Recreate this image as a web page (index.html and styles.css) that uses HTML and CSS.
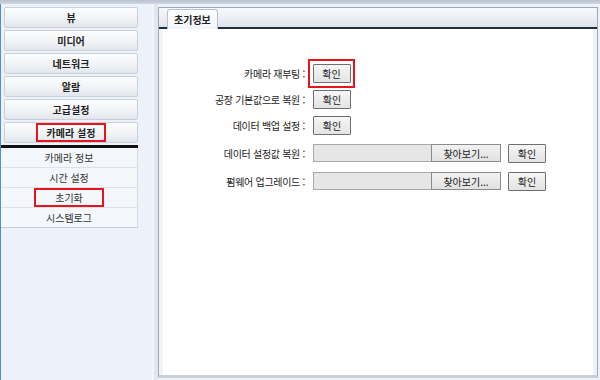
FILE: index.html
```html
<!DOCTYPE html>
<html lang="ko">
<head>
  <meta charset="UTF-8" />
  <title>초기화</title>
  <link rel="stylesheet" href="styles.css">
</head>
<body>
  <div class="topline"></div>
  <div class="layout">
    <!-- left navigation -->
    <aside class="sidebar">
      <ul class="menu">
        <li class="menu-btn">뷰</li>
        <li class="menu-btn">미디어</li>
        <li class="menu-btn">네트워크</li>
        <li class="menu-btn">알람</li>
        <li class="menu-btn">고급설정</li>
        <li class="menu-btn"><span class="mark">카메라 설정</span></li>
      </ul>
      <ul class="submenu">
        <li class="sub-item">카메라 정보</li>
        <li class="sub-item">시간 설정</li>
        <li class="sub-item"><span class="mark">초기화</span></li>
        <li class="sub-item">시스템로그</li>
      </ul>
    </aside>
    <div class="gutter"></div>
    <!-- main panel -->
    <main class="panel">
      <div class="tabbar">
        <div class="tab">초기정보</div>
      </div>
      <div class="panel-body">
        <div class="form">
          <div class="row">
            <label class="label">카메라 재부팅 :</label>
            <span class="mark-box"><button class="btn">확인</button></span>
          </div>
          <div class="row">
            <label class="label">공장 기본값으로 복원 :</label>
            <button class="btn">확인</button>
          </div>
          <div class="row">
            <label class="label">데이터 백업 설정 :</label>
            <button class="btn">확인</button>
          </div>
          <div class="row file-row">
            <label class="label">데이터 설정값 복원 :</label>
            <span class="file"><span class="file-path"></span><span class="file-btn">찾아보기...</span></span>
            <button class="btn">확인</button>
          </div>
          <div class="row file-row">
            <label class="label">펌웨어 업그레이드 :</label>
            <span class="file"><span class="file-path"></span><span class="file-btn">찾아보기...</span></span>
            <button class="btn">확인</button>
          </div>
        </div>
      </div>
    </main>
  </div>
</body>
</html>
```
FILE: styles.css
```css
/* page */
body {
  margin: 0;
  height: 380px;
  overflow: hidden;
  background-color: #edf2fa;
  font-family: "Noto Sans CJK KR", "DejaVu Sans", sans-serif;
  font-size: 10px;
  color: #222;
}
.topline {
  height: 4px;
  background: linear-gradient(#b9c2ce, #cfd6df);
}
.layout {
  display: flex;
  height: 376px;
}
/* sidebar */
.sidebar {
  width: 137px;
  border-left: 1px solid #4a8fd8;
  padding-top: 3px;
}
.menu,
.submenu {
  list-style: none;
  margin: 0;
  padding: 0;
}
.menu-btn {
  display: flex;
  justify-content: center;
  align-items: center;
  height: 19px;
  margin: 0 0 2px 3px;
  border: 1px solid #c8d0da;
  border-radius: 2px;
  background: linear-gradient(#fcfdfe, #f1f3f6 55%, #e2e6ec);
  font-weight: bold;
}
/* red annotation box */
.mark {
  display: inline-flex;
  justify-content: center;
  align-items: center;
  width: 66px;
  height: 15px;
  border: 2px solid #e8141c;
}
.submenu {
  border-top: 3px solid #111;
}
.sub-item {
  display: flex;
  justify-content: center;
  align-items: center;
  height: 19px;
  border-bottom: 1px solid #dce2ea;
  border-right: 1px solid #d3dae3;
  background-color: #f4f7fb;
  color: #333;
}
.sub-item:last-child {
  border-bottom: 1px solid #c3ccd6;
}
.gutter {
  width: 20px;
  background: linear-gradient(90deg, #edf2fa 70%, #f8fafd 72%, #edf2fa 76%, #e1e7ef 85%);
}
/* panel */
.panel {
  flex: 1;
  margin: 3px 2px 2px 0;
  border: 1px solid #9ea7b2;
  border-bottom: 3px solid #c9d0d8;
  background-color: #fff;
  display: flex;
  flex-direction: column;
}
.tabbar {
  height: 19px;
  padding-left: 8px;
  background: linear-gradient(#f7f9fb, #e9edf2 60%, #dce3eb);
  border-bottom: 2px solid #1c2d44;
  display: flex;
  align-items: flex-end;
}
.tab {
  height: 19px;
  margin-bottom: -2px;
  padding: 0 6px;
  display: flex;
  align-items: center;
  border: 1px solid #b8c1cc;
  border-bottom: none;
  border-radius: 3px 3px 0 0;
  background: linear-gradient(#ffffff, #f1f4f8);
  font-weight: bold;
  color: #222;
}
.panel-body {
  flex: 1;
  border-left: 4px solid #f1f4f8;
  border-right: 4px solid #eef1f5;
}
/* form */
.form {
  padding-top: 33px;
  display: flex;
  flex-direction: column;
  gap: 4px;
}
.row {
  display: flex;
  align-items: center;
  height: 22px;
}
.file-row {
  margin-top: 2px;
}
.label {
  width: 142px;
  padding-right: 8px;
  text-align: right;
  letter-spacing: -0.3px;
  color: #222;
}
.btn {
  width: 38px;
  height: 19px;
  padding: 0;
  border: 1px solid #6f6f6f;
  border-radius: 1px;
  background: linear-gradient(#f6f6f6, #e3e3e3);
  font-family: inherit;
  font-size: 10px;
  color: #222;
}
.mark-box {
  display: inline-flex;
  align-items: center;
  justify-content: center;
  width: 43px;
  height: 25px;
  margin-left: -5px;
  border: 2px solid #e8141c;
}
.file {
  display: flex;
  width: 188px;
  height: 18px;
  margin-right: 7px;
}
.file-path {
  flex: 1;
  background-color: #e6e6e6;
  border: 1px solid #a8a8a8;
  border-right: none;
}
.file-btn {
  width: 68px;
  display: flex;
  align-items: center;
  justify-content: center;
  background: linear-gradient(#f2f2f2, #e1e1e1);
  border: 1px solid #8a8a8a;
  color: #222;
}
```
